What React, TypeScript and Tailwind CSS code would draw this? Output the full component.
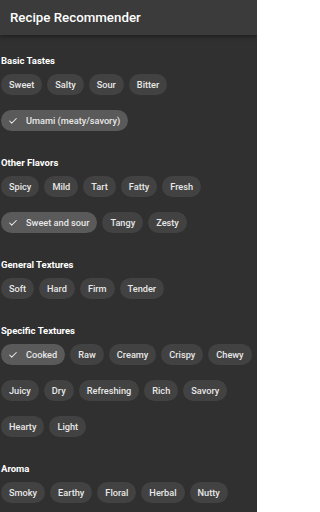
import { Check } from 'lucide-react'

type Group = { title: string; items: string[] }

const groups: Group[] = [
  { title: 'Basic Tastes', items: ['Sweet', 'Salty', 'Sour', 'Bitter', 'Umami (meaty/savory)'] },
  { title: 'Other Flavors', items: ['Spicy', 'Mild', 'Tart', 'Fatty', 'Fresh', 'Sweet and sour', 'Tangy', 'Zesty'] },
  { title: 'General Textures', items: ['Soft', 'Hard', 'Firm', 'Tender'] },
  {
    title: 'Specific Textures',
    items: ['Cooked', 'Raw', 'Creamy', 'Crispy', 'Chewy', 'Juicy', 'Dry', 'Refreshing', 'Rich', 'Savory', 'Hearty', 'Light'],
  },
  { title: 'Aroma', items: ['Smoky', 'Earthy', 'Floral', 'Herbal', 'Nutty'] },
]

const selected = new Set(['Umami (meaty/savory)', 'Sweet and sour', 'Cooked'])

function Chip({ label }: { label: string }) {
  const on = selected.has(label)
  if (on) {
    return (
      <div className="flex h-[21px] items-center rounded-full bg-[#5a5a5a] pl-[7px] pr-[8px] text-[9.2px] font-medium text-[#e8e8e8]">
        <Check className="mr-[8px] h-[10px] w-[10px] text-[#e8e8e8]" strokeWidth={2.5} />
        {label}
      </div>
    )
  }
  return (
    <div className="flex h-[21px] items-center rounded-full bg-[#424242] px-[8px] text-[9.2px] font-medium text-[#e8e8e8]">
      {label}
    </div>
  )
}

export default function App() {
  return (
    <div className="min-h-[512px] w-[257px] overflow-hidden bg-[#303030]" style={{ fontFamily: 'Roboto, "Liberation Sans", sans-serif' }}>
      <div className="flex h-[35px] items-center bg-[#3b3b3b] pl-[10px] shadow-[0_2px_4px_rgba(0,0,0,0.35)]">
        <h1 className="text-[13.3px] font-medium text-white">Recipe Recommender</h1>
      </div>
      <div className="flex flex-col gap-[26px] px-px pt-[20px]">
        {groups.map((g) => (
          <section key={g.title} className="flex flex-col gap-[7px]">
            <h2 className="text-[9.5px] font-bold leading-[12px] text-white">{g.title}</h2>
            <div className="flex flex-wrap gap-x-[5px] gap-y-[15px]">
              {g.items.map((it) => (
                <Chip key={it} label={it} />
              ))}
            </div>
          </section>
        ))}
      </div>
    </div>
  )
}
